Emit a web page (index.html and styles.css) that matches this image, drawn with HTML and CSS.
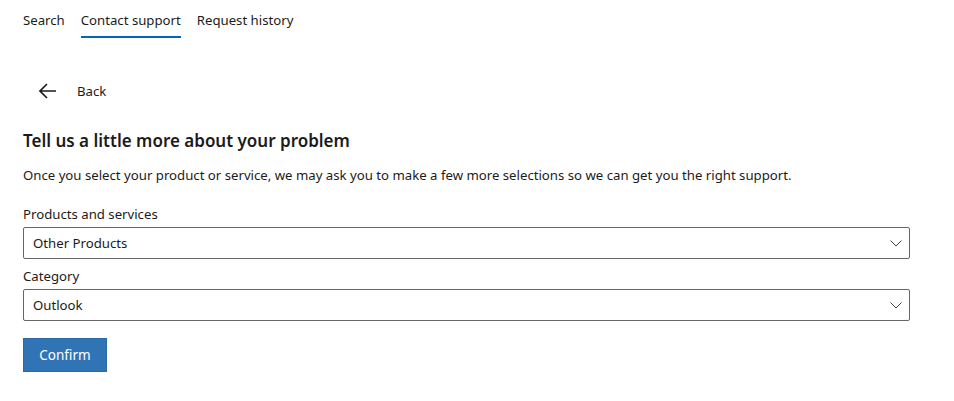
FILE: index.html
```html
<!DOCTYPE html>
<html lang="en">
<head>
<meta charset="utf-8">
<title>Contact support</title>
<link rel="stylesheet" href="styles.css">
</head>
<body>
<div class="page">
  <nav class="tabs">
    <a class="tab">Search</a>
    <a class="tab active">Contact support</a>
    <a class="tab">Request history</a>
  </nav>
  <a class="back">
    <svg class="back-icon" width="18" height="16" viewBox="0 0 18 16"><path d="M8 1 L1 8 L8 15 M1 8 H17" fill="none" stroke="#1b1b1b" stroke-width="1.6"/></svg>
    <span>Back</span>
  </a>
  <h1 class="title">Tell us a little more about your problem</h1>
  <p class="intro">Once you select your product or service, we may ask you to make a few more selections so we can get you the right support.</p>
  <div class="field">
    <label class="label">Products and services</label>
    <div class="select"><span>Other Products</span><svg class="chev" width="12" height="7" viewBox="0 0 12 7"><path d="M0.5 0.5 L6 6 L11.5 0.5" fill="none" stroke="#444" stroke-width="1"/></svg></div>
  </div>
  <div class="field second">
    <label class="label">Category</label>
    <div class="select"><span>Outlook</span><svg class="chev" width="12" height="7" viewBox="0 0 12 7"><path d="M0.5 0.5 L6 6 L11.5 0.5" fill="none" stroke="#444" stroke-width="1"/></svg></div>
  </div>
  <button class="confirm">Confirm</button>
</div>
</body>
</html>
```
FILE: styles.css
```css
html, body { margin: 0; padding: 0; background: #fff; }
body { font-family: "Noto Sans", "Open Sans", sans-serif; color: #1b1b1b; font-size: 13.2px; }
.page { padding: 0 44px 0 23px; width: 887px; }
.tabs { display: flex; gap: 16px; height: 38px; align-items: flex-start; }
.tab { line-height: 20px; padding-top: 10px; height: 26px; color: #1b1b1b; border-bottom: 2px solid transparent; }
.tab.active { border-bottom-color: #0067b8; }
.back { display: flex; align-items: center; gap: 20px; margin-top: 43px; padding-left: 16px; height: 20px; }
.back-icon { display: block; }
.title { font-size: 17px; font-weight: 600; margin: 28px 0 0; line-height: 24px; }
.intro { margin: 12px 0 0; line-height: 20px; }
.field { margin-top: 19px; }
.field.second { margin-top: 7px; }
.label { display: block; line-height: 20px; margin-bottom: 3px; }
.select { box-sizing: border-box; height: 32px; border: 1px solid #666; border-radius: 2px; display: flex; align-items: center; justify-content: space-between; padding: 0 7px 0 9px; }
.chev { display: block; }
.confirm { margin-top: 17px; height: 34px; width: 84px; background: #3174b6; color: #fff; border: 1px solid #2c6aa6; font-family: inherit; font-size: 13.5px; padding: 0; }
```
